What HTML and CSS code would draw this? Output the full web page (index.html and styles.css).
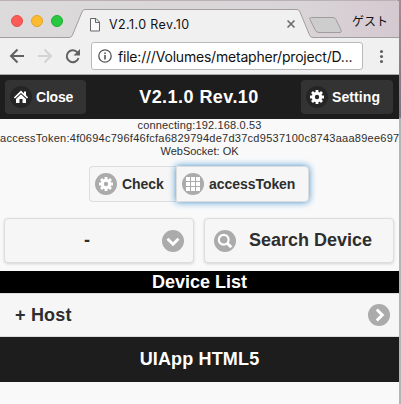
FILE: index.html
```
<!DOCTYPE html>
<html lang="ja">
<head>
<meta charset="utf-8">
<title>V2.1.0 Rev.10</title>
<link rel="stylesheet" href="styles.css">
</head>
<body>
<div class="window">
  <div class="tabbar">
    <svg class="tabshape" width="399" height="38" viewBox="0 0 399 38">
      <path d="M0 37.500H69Q71.500 37.500 72.500 35L82 12Q83 9.500 85 9.500H297Q299 9.500 300 12L309.500 35Q310.500 37.500 313 37.500H399V39H0Z" fill="#f1f0f1" stroke="#a19e9f"/>
      <path d="M311.500 17.500H333Q335 17.500 336 19.500L341 30Q342 32.500 340 32.500H319Q316.500 32.500 315.500 30.500L310 19.500Q309 17.500 311.500 17.500Z" fill="#cecdce" stroke="#a09c9e"/>
    </svg>
    <div class="lights"><i class="red"></i><i class="yellow"></i><i class="green"></i></div>
    <svg class="doc" width="12" height="15" viewBox="0 0 12 15"><path d="M1.500 1.500H7L10.500 5V14H1.500ZM6.500 1.500V5.500H10.500" fill="#fafafa" stroke="#666"/></svg>
    <span class="tabtitle">V2.1.0 Rev.10</span>
    <svg class="close" width="8" height="8" viewBox="0 0 8 8"><path d="M.5.5L7.500 7.500M7.500.5L.5 7.500" stroke="#666" stroke-width="1.500"/></svg>
    <span class="guest">ゲスト</span>
  </div>
  <div class="toolbar">
    <svg class="navicons" width="84" height="36" viewBox="0 0 84 36" fill="none" stroke-width="2">
      <path d="M24 18H11.500M17.500 11.500L11 18L17.500 24.500" stroke="#616161"/>
      <path d="M38 18H50.500M44.500 11.500L51 18L44.500 24.500" stroke="#d3d3d3"/>
      <path d="M77.500 14.500A6 6 0 1 0 78.500 20" stroke="#616161"/>
      <path d="M80 11V17.500H73.500Z" fill="#616161"/>
    </svg>
    <div class="address">
      <svg width="14" height="14" viewBox="0 0 14 14"><circle cx="7" cy="7" r="6.200" fill="none" stroke="#555" stroke-width="1.300"/><path d="M7 6V10.500M7 3.500V5" stroke="#555" stroke-width="1.600"/></svg>
      <span>file:///Volumes/metapher/project/D...</span>
    </div>
    <div class="menu"><i></i><i></i><i></i></div>
  </div>
  <header class="header">
    <div class="navbtn">
      <svg width="22" height="22" viewBox="0 0 22 22"><circle cx="11" cy="11" r="11" fill="#252525"/><path d="M11 4.500L3.800 11.500L5 12.600L11 7L17 12.600L18.200 11.500L16 9.300V5.500H14V7.400ZM11 8.300L6 13V17H9.500V13H12.500V17H16V13Z" fill="#fff"/></svg>
      <span class="t-close">Close</span>
    </div>
    <h1>V2.1.0 Rev.10</h1>
    <div class="navbtn setting">
      <svg width="22" height="22" viewBox="0 0 22 22"><circle cx="11" cy="11" r="11" fill="#252525"/><g stroke="#fff"><circle cx="11" cy="11" r="3.750" fill="none" stroke-width="3"/><path d="M11 4V18M4 11H18M6 6L16 16M16 6L6 16" stroke-width="2.800"/></g><circle cx="11" cy="11" r="2.200" fill="#252525"/></svg>
      <span class="t-setting">Setting</span>
    </div>
  </header>
  <main>
    <div class="status">
      <div><span class="connecting">connecting:192.168.0.53</span></div>
      <div class="token"><span>accessToken:4f0694c796f46fcfa6829794de7d37cd9537100c8743aaa89ee697</span></div>
      <div><span>WebSocket: OK</span></div>
    </div>
    <div class="group">
      <div class="seg check">
        <svg width="22" height="22" viewBox="0 0 22 22"><circle cx="11" cy="11" r="11" fill="#ababab"/><g stroke="#fff"><circle cx="11" cy="11" r="3.750" fill="none" stroke-width="3"/><path d="M11 4V18M4 11H18M6 6L16 16M16 6L6 16" stroke-width="2.800"/></g><circle cx="11" cy="11" r="2.200" fill="#ababab"/></svg>
        <span>Check</span>
      </div>
      <div class="seg active">
        <svg width="22" height="22" viewBox="0 0 22 22"><circle cx="11" cy="11" r="11" fill="#ababab"/><path d="M4 4H8V8H4ZM9 4H13V8H9ZM14 4H18V8H14ZM4 9H8V13H4ZM9 9H13V13H9ZM14 9H18V13H14ZM4 14H8V18H4ZM9 14H13V18H9ZM14 14H18V18H14Z" fill="#fff"/></svg>
        <span>accessToken</span>
      </div>
    </div>
    <div class="controls">
      <div class="box select"><span>-</span>
        <svg width="22" height="22" viewBox="0 0 22 22"><circle cx="11" cy="11" r="11" fill="#ababab"/><path d="M5.500 8.800L11 14.300L16.500 8.800" fill="none" stroke="#fff" stroke-width="2.900"/></svg>
      </div>
      <div class="box search">
        <svg width="22" height="22" viewBox="0 0 22 22"><circle cx="11" cy="11" r="11" fill="#ababab"/><circle cx="9.700" cy="9.700" r="4.900" fill="none" stroke="#fff" stroke-width="2.200"/><path d="M13 13L17.300 17.300" stroke="#fff" stroke-width="3"/></svg>
        <span>Search Device</span>
      </div>
    </div>
    <div class="divider"><span>Device List</span></div>
    <div class="row"><span>+ Host</span>
      <svg width="22" height="22" viewBox="0 0 22 22"><circle cx="11" cy="11" r="11" fill="#ababab"/><path d="M8.800 5.500L14.300 11L8.800 16.500" fill="none" stroke="#fff" stroke-width="2.900"/></svg>
    </div>
  </main>
  <footer><span>UIApp HTML5</span></footer>
</div>
</body>
</html>
```
FILE: styles.css
```
* { box-sizing: border-box; }
body {
  margin: 0;
  height: 404px;
  overflow: hidden;
  background: linear-gradient(#a98994 0, #81727f 117px, #b5b5b5 119px);
  font-family: "Liberation Sans", "Noto Sans CJK JP", sans-serif;
  color: #2e2e2e;
}
svg { display: block; flex: none; }
span { white-space: nowrap; }
.window {
  width: 399px;
  height: 404px;
  background: #f9f9f9;
  overflow: hidden;
  border-top-right-radius: 4px;
}
.tabbar {
  position: relative;
  height: 38px;
  display: flex;
  align-items: center;
  border-top: 1px solid #bbb0b4;
  background: linear-gradient(90deg, #dcdadb 0, #d9d4d7 300px, #d5c9d0);
}
.tabshape { position: absolute; left: 0; top: -1px; }
.lights { position: relative; display: flex; gap: 8px; margin: 2px 0 0 11px; }
.lights i { width: 12px; height: 12px; border-radius: 50%; }
.red { background: #fc5b57; border: 1px solid #e5504b; }
.yellow { background: #fdbb2f; border: 1px solid #e3a425; }
.green { background: #28c840; border: 1px solid #1eae30; }
.doc { position: relative; margin: 9px 0 0 26px; }
.tabtitle {
  position: relative;
  width: 178px;
  margin: 9px 0 0 8px;
  font: 12.5px Inter, sans-serif;
  letter-spacing: .4px;
  color: #111;
}
.close { position: relative; margin-top: 9px; }
.guest { position: relative; margin: 1px 0 0 57px; font-size: 12px; color: #111; }
.toolbar {
  height: 37px;
  display: flex;
  background: #f1f0f1;
  border-bottom: 1px solid #aaa;
}
.address {
  width: 272px;
  height: 28px;
  margin: 4px 0 0 7px;
  border: 1px solid #b9b9b9;
  border-radius: 3px;
  background: #fff;
  display: flex;
  align-items: center;
  gap: 6px;
  padding-left: 6px;
  font: 14px Inter, sans-serif;
  letter-spacing: -.2px;
  color: #111;
}
.menu { display: flex; flex-direction: column; gap: 2px; margin: 12px 0 0 17px; }
.menu i { width: 3px; height: 3px; border-radius: 50%; background: #5d5d5d; }
.header {
  height: 44px;
  display: flex;
  align-items: center;
  justify-content: space-between;
  padding: 0 6px 0 5px;
  background: #1d1d1d;
  color: #fff;
  font-weight: bold;
}
.navbtn {
  width: 81px;
  height: 34px;
  display: flex;
  align-items: center;
  gap: 4px;
  padding-left: 5px;
  background: #333;
  border-radius: 4px;
  font-size: 14px;
}
.t-close { letter-spacing: -.2px; }
.t-setting { letter-spacing: .1px; }
.navbtn.setting { width: 92px; }
h1 { margin: 0 0 0 11px; font-size: 18px; line-height: 24px; letter-spacing: .45px; }
.status { height: 46px; font-size: 11px; line-height: 13px; text-align: center; }
.connecting { letter-spacing: .15px; }
.token { text-align: left; letter-spacing: .26px; }
.group { display: flex; width: 221px; margin: 1px 0 0 89px; }
.seg {
  height: 36px;
  display: flex;
  align-items: center;
  gap: 5px;
  padding-left: 5px;
  border: 1px solid #ddd;
  background: #f6f6f6;
  font-size: 14px;
  font-weight: bold;
  letter-spacing: -.05px;
}
.check { width: 87px; border-right: 0; border-radius: 4px 0 0 4px; }
.active { width: 133px; border-radius: 0 4px 4px 0; box-shadow: 0 0 7px #388ccc; }
.controls { display: flex; gap: 10px; padding: 16px 4px 8px; }
.box {
  width: 190px;
  height: 45px;
  display: flex;
  align-items: center;
  border: 1px solid #ddd;
  border-radius: 4px;
  background: #f6f6f6;
  box-shadow: 0 1px 3px rgba(0, 0, 0, .15);
  font-size: 18px;
  font-weight: bold;
}
.select { justify-content: space-between; padding: 0 9px 0 79px; }
.search { padding-left: 9px; gap: 13px; }
.divider {
  height: 22px;
  background: #000;
  color: #fff;
  text-align: center;
  font-size: 18px;
  font-weight: bold;
  line-height: 22px;
}
.row {
  height: 44px;
  display: flex;
  align-items: center;
  justify-content: space-between;
  padding: 0 9px 0 15px;
  border-top: 1px solid #ddd;
  border-bottom: 1px solid #ddd;
  background: #f6f6f6;
  font-size: 18px;
  font-weight: bold;
  letter-spacing: .2px;
}
footer {
  height: 45px;
  background: #1d1d1d;
  color: #fff;
  text-align: center;
  font-size: 18px;
  font-weight: bold;
  line-height: 45px;
  letter-spacing: .15px;
}
```
